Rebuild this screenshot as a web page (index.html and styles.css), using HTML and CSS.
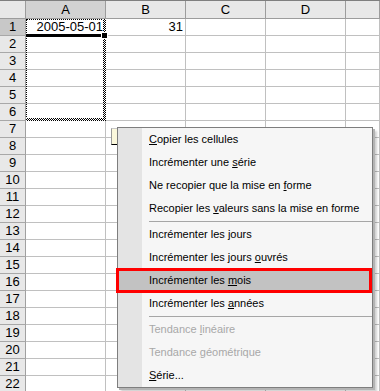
FILE: index.html
```html
<!DOCTYPE html>
<html lang="fr">
<head>
    <meta charset="UTF-8">
    <title>Recopie incrémentée</title>
    <link rel="stylesheet" href="styles.css">
</head>
<body>

    <div class="sheet">
        <table class="grid">
            <colgroup>
                <col class="col-head">
                <col class="col"><col class="col"><col class="col"><col class="col"><col>
            </colgroup>
            <tr class="head-row"><th></th><th class="on">A</th><th>B</th><th>C</th><th>D</th><th></th></tr>
            <tr><th class="on">1</th><td class="num">2005-05-01</td><td class="num">31</td><td></td><td></td><td></td></tr>
            <tr><th>2</th><td></td><td></td><td></td><td></td><td></td></tr>
            <tr><th>3</th><td></td><td></td><td></td><td></td><td></td></tr>
            <tr><th>4</th><td></td><td></td><td></td><td></td><td></td></tr>
            <tr><th>5</th><td></td><td></td><td></td><td></td><td></td></tr>
            <tr><th>6</th><td></td><td></td><td></td><td></td><td></td></tr>
            <tr><th>7</th><td></td><td></td><td></td><td></td><td></td></tr>
            <tr><th>8</th><td></td><td></td><td></td><td></td><td></td></tr>
            <tr><th>9</th><td></td><td></td><td></td><td></td><td></td></tr>
            <tr><th>10</th><td></td><td></td><td></td><td></td><td></td></tr>
            <tr><th>11</th><td></td><td></td><td></td><td></td><td></td></tr>
            <tr><th>12</th><td></td><td></td><td></td><td></td><td></td></tr>
            <tr><th>13</th><td></td><td></td><td></td><td></td><td></td></tr>
            <tr><th>14</th><td></td><td></td><td></td><td></td><td></td></tr>
            <tr><th>15</th><td></td><td></td><td></td><td></td><td></td></tr>
            <tr><th>16</th><td></td><td></td><td></td><td></td><td></td></tr>
            <tr><th>17</th><td></td><td></td><td></td><td></td><td></td></tr>
            <tr><th>18</th><td></td><td></td><td></td><td></td><td></td></tr>
            <tr><th>19</th><td></td><td></td><td></td><td></td><td></td></tr>
            <tr><th>20</th><td></td><td></td><td></td><td></td><td></td></tr>
            <tr><th>21</th><td></td><td></td><td></td><td></td><td></td></tr>
            <tr><th>22</th><td></td><td></td><td></td><td></td><td></td></tr>
        </table>

        <!-- selection A1 + copy marquee A1:A6 -->
        <div class="marquee"></div>
        <div class="active-cell"><span class="fill-handle"></span></div>
        <div class="smart-tag"></div>
    </div>

    <ul class="menu">
        <li><u>C</u>opier les cellules</li>
        <li>Incrémenter une <u>s</u>érie</li>
        <li>Ne recopier que la mise en <u>f</u>orme</li>
        <li>Recopier les <u>v</u>aleurs sans la mise en forme</li>
        <li class="sep"></li>
        <li>Incrémenter les <u>j</u>ours</li>
        <li>Incrémenter les jours <u>o</u>uvrés</li>
        <li class="hot">Incrémenter les <u>m</u>ois</li>
        <li>Incrémenter les <u>a</u>nnées</li>
        <li class="sep"></li>
        <li class="off">Tendance <u>l</u>inéaire</li>
        <li class="off">Tendance <u>g</u>éométrique</li>
        <li><u>S</u>érie...</li>
    </ul>

</body>
</html>
```

FILE: styles.css
```css
body {
    margin: 0;
    width: 380px;
    height: 391px;
    overflow: hidden;
    background-color: #FFFFFF;
    position: relative;
    font-family: 'Liberation Sans', Arial, sans-serif;
}

.sheet {
    position: relative;
    border-top: 1px solid #7F7F7F;
}

.grid {
    border-collapse: separate;
    border-spacing: 0;
    table-layout: fixed;
    width: 380px;
    font-size: 13px;
}

.col-head {
    width: 26px;
}

.col {
    width: 80px;
}

.grid th,
.grid td {
    height: 16px;
    padding: 0;
    line-height: 16px;
    border-right: 1px solid #C0C0C0;
    border-bottom: 1px solid #C0C0C0;
    white-space: nowrap;
    overflow: hidden;
}

.grid th {
    background-color: #E8E8E8;
    font-weight: normal;
    text-align: center;
    color: #000000;
    border-right-color: #A0A0A0;
    border-bottom-color: #A8A8A8;
}

.grid .head-row th {
    height: 17px;
    line-height: 17px;
    border-right-color: #9C9C9C;
    border-bottom-color: #9C9C9C;
}

.grid th.on {
    background-color: #C8C8C8;
}

.grid .head-row th.on {
    background-color: #D2D2D2;
}

.grid td.num {
    text-align: right;
    padding-right: 2px;
}

/* copy marquee: thin dotted on top/left, 3px checker on right/bottom */
.marquee {
    position: absolute;
    left: 26px;
    top: 18px;
    width: 80px;
    height: 102px;
    box-sizing: border-box;
    border-left: 1px dotted #000000;
    border-top: 1px dotted #000000;
}

.marquee::before,
.marquee::after {
    content: "";
    position: absolute;
    background: repeating-conic-gradient(#000000 0 25%, #FFFFFF 0 50%) 0 0 / 2px 2px;
}

.marquee::before {
    right: 0;
    top: -1px;
    width: 3px;
    bottom: 0;
}

.marquee::after {
    left: -1px;
    right: 0;
    bottom: 0;
    height: 3px;
}

.active-cell {
    position: absolute;
    left: 26px;
    top: 33px;
    width: 77px;
    height: 3px;
    background-color: #000000;
}

.fill-handle {
    position: absolute;
    right: -5px;
    top: -2px;
    width: 5px;
    height: 5px;
    background-color: #000000;
    border: 1px solid #FFFFFF;
}

.smart-tag {
    position: absolute;
    left: 111px;
    top: 127px;
    width: 8px;
    height: 15px;
    background-color: #FBF8DC;
    border-left: 1px solid #9A9A9A;
    border-top: 1px solid #C8C8C8;
    border-bottom: 1px solid #000000;
}

.menu {
    position: absolute;
    left: 117px;
    top: 127px;
    width: 254px;
    margin: 0;
    padding: 0;
    list-style: none;
    border: 1px solid #7E7E7E;
    background: linear-gradient(to right, #E4E4E4 24px, #F6F6F6 24px);
    box-shadow: 2px 2px 0 #B4B4B4, 4px 4px 2px rgba(0, 0, 0, 0.18);
    font-size: 11px;
    color: #000000;
}

.menu li {
    position: relative;
    height: 23px;
    line-height: 23px;
    padding-left: 31px;
    white-space: nowrap;
}

.menu li.sep {
    height: 3px;
    padding: 0;
    margin-left: 31px;
    background: linear-gradient(#F6F6F6 1px, #A6A6A6 1px, #A6A6A6 2px, #F6F6F6 2px);
}

.menu li.off {
    color: #A8A8A8;
}

.menu li.hot {
    background-color: #C2C2C2;
}

.menu li.hot::after {
    content: "";
    position: absolute;
    left: -2px;
    right: 0;
    top: -1px;
    bottom: -1px;
    border: 3px solid #FF0000;
}
```
